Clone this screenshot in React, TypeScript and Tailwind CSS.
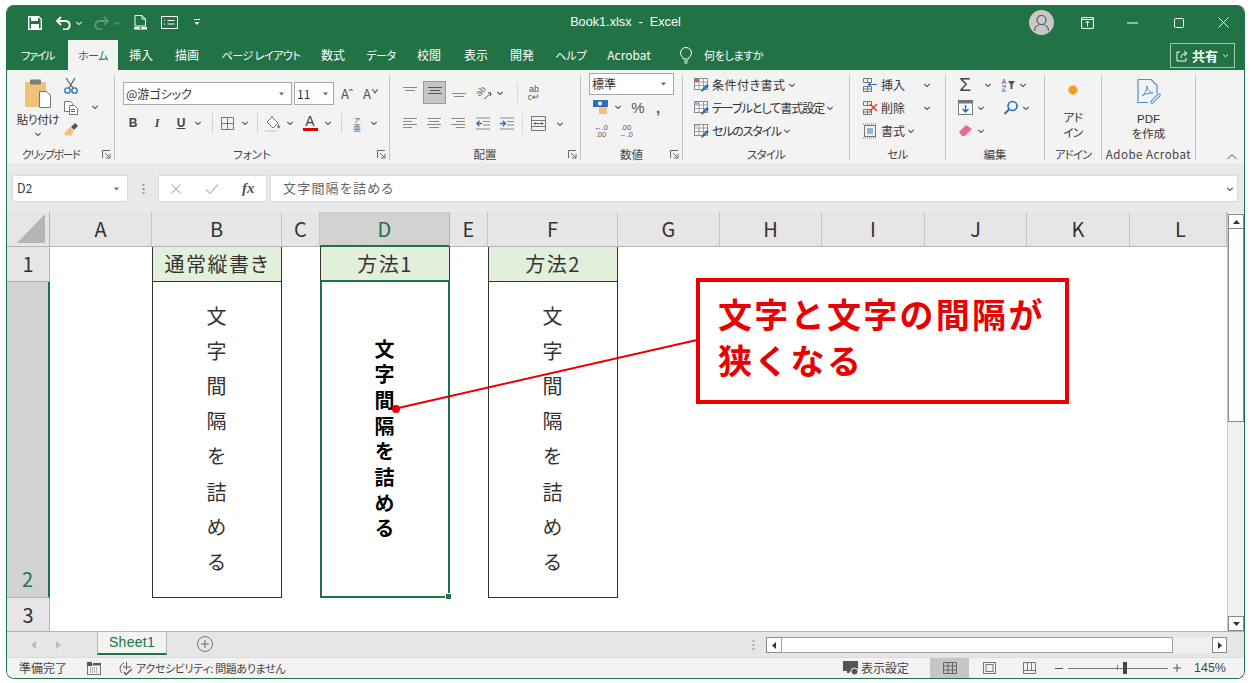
import React from "react";

const Chev = ({ c = "#555", s = 8 }: { c?: string; s?: number }) => (
  <svg width={s} height={s} viewBox="0 0 8 8" className="shrink-0"><path d="M1.2 2.8 4 5.4l2.8-2.6" fill="none" stroke={c} strokeWidth="1.1" /></svg>
);
const Launcher = () => (
  <svg width="9" height="9" viewBox="0 0 9 9" className="shrink-0"><path d="M.5 8V.5H8M3 3l4.5 4.5M4 8h4V4" fill="none" stroke="#666" strokeWidth="1" /></svg>
);
const Drop = () => <svg width="7" height="4" viewBox="0 0 7 4" className="shrink-0"><path d="M1 .5h5L3.5 3.5z" fill="#666" /></svg>;

function Lines({ rows, active }: { rows: [number, number][]; active?: boolean }) {
  return (
    <svg width="16" height="14" viewBox="0 0 16 14">
      {rows.map(([x, w], i) => (
        <rect key={i} x={x} y={1 + i * 3} width={w} height="1" fill={active ? "#555" : "#8a8a8a"} />
      ))}
    </svg>
  );
}

function Indent({ dir }: { dir: "l" | "r" }) {
  return (
    <svg width="16" height="14" viewBox="0 0 16 14">
      <path d="M1 1h14M8 4.500h7M8 8h7M1 12h14" stroke="#8a8a8a" strokeWidth="1" />
      <path d={dir === "l" ? "M7 6.500H2M4.500 3.800 1.800 6.500l2.700 2.700" : "M1 6.500h5M3.800 3.800l2.700 2.700-2.700 2.700"} stroke="#2f6fb5" strokeWidth="1.300" fill="none" />
    </svg>
  );
}

function Group({ w, label, labelCls = "", launcher, children }: { w: string; label: string; labelCls?: string; launcher?: boolean; children: React.ReactNode }) {
  return (
    <div className={`${w} h-[85px] mt-[5px] flex flex-col shrink-0 border-r border-[#c4c4c4]`}>
      <div className="h-[73px] flex min-h-0">{children}</div>
      <div className="h-[12px] flex items-center relative">
        <span className={`flex-1 text-center text-[11.500px] leading-[12px] text-[#444] whitespace-nowrap ${labelCls}`}>{label}</span>
        {launcher && <span className="absolute right-[3px] top-[2px]"><Launcher /></span>}
      </div>
    </div>
  );
}

const StyleRow = ({ icon, text, cls }: { icon: React.ReactNode; text: string; cls: string }) => (
  <div className="h-[23px] flex items-center gap-[2px] text-[12px] text-[#333] whitespace-nowrap">
    {icon}
    <span className={cls}>{text}</span>
    <Chev />
  </div>
);

const TableIcon = ({ tone }: { tone: string }) => (
  <svg width="16" height="16" viewBox="0 0 16 16">
    <rect x=".5" y="1.500" width="13" height="11" fill="#fff" stroke="#8a8a8a" />
    <path d="M.5 5h13M.5 8.500h13M5 1.500v11M9.500 1.500v11" stroke="#9a9a9a" />
    <rect x="1" y="2" width="4" height="3" fill={tone} />
    <path d="M8 15l7-6-2-2-6 6z" fill="#2f6fb5" />
  </svg>
);

const CellsIcon = ({ children }: { children?: React.ReactNode }) => (
  <svg width="16" height="16" viewBox="0 0 16 16">
    <path d="M1.500 1.500h8v4h-8zM1.500 9.500h8v5h-8zM5.500 1.500v4M5.500 9.500v5M1.500 12h8" fill="none" stroke="#777" />
    {children}
  </svg>
);

const Sep = () => <div className="w-px h-[20px] bg-[#d0d0d0] shrink-0" />;

function Ribbon() {
  return (
    <div className="h-[93px] shrink-0 bg-[#f3f3f3] flex">
      <Group w="w-[108px]" label="クリップボード" labelCls="text-[11px] tracking-[-1.500px] pr-[20px]" launcher>
        <div className="w-[60px] shrink-0 flex flex-col items-center pt-[3px] pl-[2px]">
          <svg width="28" height="31" viewBox="0 0 28 31">
            <rect x="1" y="4" width="21" height="25" rx="1" fill="#eec27a" />
            <rect x="6" y="1.500" width="11" height="5" rx="1" fill="#7d7d7d" />
            <path d="M15.500 13.500h7l4 4v12h-11z" fill="#fff" stroke="#777" />
          </svg>
          <span className="text-[11.500px] leading-[14px] text-[#333] mt-[3px] whitespace-nowrap tracking-[-0.300px]">貼り付け</span>
          <span className="mt-[4px]"><Chev /></span>
        </div>
        <div className="flex flex-col items-center w-[20px] -ml-[6px] pt-[2px] gap-[6px]">
          <svg width="16" height="17" viewBox="0 0 16 17"><path d="M3 1l7 10M12 1 6 11" stroke="#666" strokeWidth="1.300" fill="none" /><circle cx="4.500" cy="13.500" r="2.700" fill="none" stroke="#2f6fb5" strokeWidth="1.300" /><circle cx="11.500" cy="13.500" r="2.700" fill="none" stroke="#2f6fb5" strokeWidth="1.300" /></svg>
          <svg width="16" height="16" viewBox="0 0 16 16"><path d="M1.500 1.500h6l2 2v8h-8z" fill="#fff" stroke="#777" /><path d="M6.500 5.500h5l3 3v6h-8z" fill="#fff" stroke="#777" /><path d="M8 9.500h4M8 11.500h4" stroke="#2f6fb5" /></svg>
          <svg width="17" height="15" viewBox="0 0 17 15"><path d="M1 11l6-6 4 4-3 5-3-1-2 1z" fill="#eec27a" /><path d="M8 5l4-4 3 3-4 4z" fill="#555" /></svg>
        </div>
        <div className="pt-[28px] pl-[10px]"><Chev /></div>
      </Group>
      <Group w="w-[275px]" label="フォント" launcher>
        <div className="flex flex-col pl-[8px] pt-[7px]">
          <div className="flex items-center h-[23px]">
            <div className="w-[169px] h-[23px] bg-white border border-[#a8a8a8] flex items-center pl-[2px] pr-[6px] justify-between text-[12px] text-[#333]">
              <span>@游ゴシック</span><Drop />
            </div>
            <div className="w-[40px] h-[23px] ml-[2px] bg-white border border-[#a8a8a8] flex items-center pl-[2px] pr-[4px] justify-between text-[12px] text-[#333]">
              <span>11</span><Drop />
            </div>
            <span className="ml-[6px] text-[13px] text-[#555] w-[14px] text-center">Aˆ</span>
            <span className="ml-[9px] text-[13px] text-[#555] w-[14px] text-center">Aˇ</span>
          </div>
          <div className="flex items-center h-[20px] mt-[8px] pl-[3px] text-[#444]">
            <span className="w-[14px] text-center text-[12px] font-bold font-['Liberation_Sans']">B</span>
            <span className="ml-[10px] w-[14px] text-center text-[12px] italic font-bold font-['Liberation_Serif']">I</span>
            <span className="ml-[10px] w-[14px] text-center text-[12px] underline font-bold font-['Liberation_Sans']">U</span>
            <span className="ml-[6px]"><Chev /></span>
            <span className="ml-[10px]"><Sep /></span>
            <svg className="ml-[7px]" width="15" height="15" viewBox="0 0 15 15"><path d="M1.500 1.500h12v12h-12zM7.500 1.500v12M1.500 7.500h12" fill="none" stroke="#777" /></svg>
            <span className="ml-[6px]"><Chev /></span>
            <span className="ml-[8px]"><Sep /></span>
            <svg className="ml-[7px]" width="16" height="17" viewBox="0 0 16 17"><path d="M7 2l6 6-5 5-6-6z" fill="#fff" stroke="#777" /><path d="M7 2V1" stroke="#777" /><path d="M13 9l2 3-1 1.500-1.500-1z" fill="#2f6fb5" /><rect x="0" y="15" width="12" height="2" fill="#cfe3c4" /></svg>
            <span className="ml-[5px]"><Chev /></span>
            <span className="ml-[8px] w-[16px] flex flex-col items-center text-[14px] leading-[12px] font-['Liberation_Sans'] text-[#444]">A<span className="block w-[15px] h-[3px] bg-[#e00000] mt-[1px]" /></span>
            <span className="ml-[6px]"><Chev /></span>
            <span className="ml-[9px]"><Sep /></span>
            <span className="ml-[9px] w-[12px] flex flex-col items-center text-[#555]">
              <span className="text-[7px] leading-[8px]">ァ</span>
              <span className="text-[8px] leading-[9px]">亜</span>
            </span>
            <span className="ml-[7px]"><Chev /></span>
          </div>
        </div>
      </Group>
      <Group w="w-[191px]" label="配置" launcher>
        <div className="flex flex-col pl-[12px] pt-[6px]">
          <div className="flex items-center h-[23px]">
            <span className="w-[16px]"><Lines rows={[[1, 14], [3, 10]]} /></span>
            <span className="ml-[5px] w-[23px] h-[23px] bg-[#c6c6c6] border border-[#9a9a9a] flex items-center justify-center"><Lines active rows={[[1, 14], [3, 10], [1, 14]]} /></span>
            <span className="ml-[5px] w-[16px]"><Lines rows={[[0, 0], [0, 0], [1, 14], [3, 10]]} /></span>
            <span className="ml-[9px] w-[18px] h-[16px] flex items-center relative">
              <span className="-rotate-45 text-[9px] leading-[9px] text-[#666] font-['Liberation_Sans'] -mt-[3px]">ab</span>
              <svg className="absolute left-0 top-0" width="18" height="16" viewBox="0 0 18 16"><path d="M8 14l7-6M12 7.500l3 .5-.5 3" fill="none" stroke="#555" /></svg>
            </span>
            <span className="ml-[2px]"><Chev /></span>
            <div className="ml-[13px]"><div className="w-px h-[20px] bg-[#d8d8d8]" /></div>
            <span className="ml-[9px] text-[9px] leading-[8px] text-[#555] font-['Liberation_Sans'] w-[14px] text-center">ab<br />c↵</span>
          </div>
          <div className="flex items-center h-[23px] mt-[8px]">
            <span className="w-[16px]"><Lines rows={[[1, 14], [1, 9], [1, 14], [1, 9]]} /></span>
            <span className="ml-[8px] w-[16px]"><Lines rows={[[1, 14], [3, 10], [1, 14], [3, 10]]} /></span>
            <span className="ml-[8px] w-[16px]"><Lines rows={[[1, 14], [6, 9], [1, 14], [6, 9]]} /></span>
            <span className="ml-[9px]"><Indent dir="l" /></span>
            <span className="ml-[8px]"><Indent dir="r" /></span>
            <div className="ml-[7px]"><div className="w-px h-[20px] bg-[#d8d8d8]" /></div>
            <svg className="ml-[7px]" width="17" height="17" viewBox="0 0 17 17"><path d="M1.500 1.500h14v14h-14zM1.500 5.500h14M1.500 11.500h14" fill="none" stroke="#777" /><path d="M4 8.500h9M5.500 7 4 8.500 5.500 10M11.500 7 13 8.500 11.500 10" fill="none" stroke="#2f6fb5" /></svg>
            <span className="ml-[9px]"><Chev /></span>
          </div>
        </div>
      </Group>
      <Group w="w-[102px]" label="数値" launcher>
        <div className="flex flex-col pl-[8px]">
          <div className="w-[85px] h-[22px] -mt-[2px] bg-white border border-[#a8a8a8] flex items-center pl-[2px] pr-[6px] justify-between text-[12px] text-[#333]"><span>標準</span><Drop /></div>
          <div className="flex items-center h-[24px] pl-[3px]">
            <svg width="17" height="16" viewBox="0 0 17 16"><rect x="1" y="1" width="15" height="7" fill="#2f6fb5" /><circle cx="8" cy="4.500" r="2" fill="#fff" /><rect x="7" y="8" width="8" height="7" fill="#eec27a" /></svg>
            <span className="ml-[5px]"><Chev /></span>
            <span className="ml-[8px] text-[15px] text-[#555] w-[16px] text-center leading-none font-['Liberation_Sans']">%</span>
            <span className="ml-[10px] text-[15px] font-bold text-[#555] w-[8px] leading-none font-['Liberation_Sans']">,</span>
          </div>
          <div className="flex items-center h-[24px] pl-[4px] text-[7.500px] leading-[7px] text-[#555] font-['Liberation_Sans']">
            <span className="w-[16px] text-center"><span className="text-[#2f6fb5]">←</span>.0<br />.00</span>
            <span className="ml-[9px] w-[16px] text-center">.00<br /><span className="text-[#2f6fb5]">→</span>.0</span>
          </div>
        </div>
      </Group>
      <Group w="w-[167px]" label="スタイル" labelCls="tracking-[-0.800px]">
        <div className="flex flex-col pl-[11px] -mt-[2px]">
          <StyleRow icon={<TableIcon tone="#d9534f" />} text="条件付き書式" cls="tracking-[0.500px]" />
          <StyleRow icon={<TableIcon tone="#9cb9dc" />} text="テーブルとして書式設定" cls="tracking-[-1px]" />
          <StyleRow icon={<TableIcon tone="#cfd8e6" />} text="セルのスタイル" cls="tracking-[-1.200px]" />
        </div>
      </Group>
      <Group w="w-[96px]" label="セル" labelCls="tracking-[-0.500px]">
        <div className="flex flex-col pl-[12px] w-full -mt-[2px]">
          <div className="h-[23px] flex items-center text-[12px] text-[#333]"><CellsIcon><path d="M6 7.500h9M9 5.500l-3 2 3 2" stroke="#2f6fb5" fill="none" /></CellsIcon><span className="ml-[3px] w-[40px]">挿入</span><span className="ml-[2px]"><Chev /></span></div>
          <div className="h-[23px] flex items-center text-[12px] text-[#333]"><CellsIcon><path d="M8 4l7 7M15 4l-7 7" stroke="#d8452f" strokeWidth="1.500" /></CellsIcon><span className="ml-[3px] w-[40px]">削除</span><span className="ml-[2px]"><Chev /></span></div>
          <div className="h-[23px] flex items-center text-[12px] text-[#333]"><svg width="16" height="16" viewBox="0 0 16 16"><rect x="2.500" y="2.500" width="11" height="11" fill="none" stroke="#777" /><rect x="5" y="5" width="6" height="6" fill="#8fb4dc" /><path d="M1 1h14M1 15h14" stroke="#777" strokeDasharray="1 1" /></svg><span className="ml-[3px]">書式</span><span className="ml-[2px]"><Chev /></span></div>
        </div>
      </Group>
      <Group w="w-[99px]" label="編集">
        <div className="flex flex-col pl-[12px] w-full -mt-[2px]">
          <div className="h-[23px] flex items-center">
            <span className="w-[14px] text-[19px] leading-none text-[#444] font-['Liberation_Sans'] text-center">Σ</span>
            <span className="ml-[12px]"><Chev /></span>
            <svg className="ml-[9px]" width="15" height="14" viewBox="0 0 15 14"><path d="M1 6 3 1l2 5M1.700 4.500h2.600" fill="none" stroke="#7a5fb0" strokeWidth=".9" /><path d="M1 8h4l-4 5h4" fill="none" stroke="#2f6fb5" strokeWidth=".9" /><path d="M7 3h7l-2.500 3.500V11h-2V6.500z" fill="#555" /></svg>
            <span className="ml-[3px]"><Chev /></span>
          </div>
          <div className="h-[23px] flex items-center">
            <svg width="15" height="15" viewBox="0 0 15 15"><rect x=".5" y=".5" width="14" height="14" fill="#fff" stroke="#777" /><rect x=".5" y=".5" width="14" height="3" fill="#777" /><path d="M7.500 5v7M4.500 9l3 3 3-3" fill="none" stroke="#2f6fb5" strokeWidth="1.500" /></svg>
            <span className="ml-[4px]"><Chev /></span>
            <svg className="ml-[18px]" width="16" height="16" viewBox="0 0 16 16"><circle cx="9.500" cy="6" r="4.500" fill="none" stroke="#2f6fb5" strokeWidth="1.600" /><path d="M6 9.500 1.500 14" stroke="#2f6fb5" strokeWidth="2" /></svg>
            <span className="ml-[3px]"><Chev /></span>
          </div>
          <div className="h-[23px] flex items-center">
            <svg width="15" height="13" viewBox="0 0 15 13"><path d="M1 8l7-7 6 4-7 7H4z" fill="#ec6a8a" /></svg>
            <span className="ml-[4px]"><Chev /></span>
          </div>
        </div>
      </Group>
      <Group w="w-[57px]" label="アドイン" labelCls="tracking-[-1px]">
        <div className="flex flex-col items-center w-full pt-[10px]">
          <span className="w-[10px] h-[10px] rounded-full bg-[#f59a23] border border-[#fbc57e]" />
          <span className="mt-[15px] text-[11.500px] leading-[15px] text-[#333] text-center tracking-[-0.500px]">アド<br />イン</span>
        </div>
      </Group>
      <Group w="w-[94px]" label="Adobe Acrobat" labelCls="tracking-[0.500px]">
        <div className="flex flex-col items-center w-full">
          <svg className="mt-[3px]" width="28" height="28" viewBox="0 0 28 28"><path d="M3 1.500h13l6 6v8M3 1.500v23h10" fill="none" stroke="#4d8fd0" strokeWidth="1.200" /><path d="M7 18c3-2 5-6 5-10 0 3 2 6 6 7-4 0-8 1-11 3z" fill="none" stroke="#4d8fd0" /><path d="M17 24l7-7" stroke="#4d8fd0" strokeWidth="3.500" strokeLinecap="round" /><path d="M17 24l7-7" stroke="#f3f3f3" strokeWidth="1.500" strokeLinecap="round" /></svg>
          <span className="mt-[6px] text-[11.500px] leading-[15px] text-[#333] text-center font-['Liberation_Sans','Noto_Sans_CJK_JP']">PDF<br />を作成</span>
        </div>
      </Group>
      <div className="flex-1 flex items-end justify-end pr-[6px] pb-[2px]">
        <svg width="12" height="8" viewBox="0 0 12 8"><path d="M1.500 6 6 1.800 10.500 6" fill="none" stroke="#555" /></svg>
      </div>
    </div>
  );
}

const cols = "grid-cols-[43px_102px_130px_38px_130px_38px_130px_102px_102px_103px_102px_103px_1fr]";

function Hdr({ t, sel }: { t: string; sel?: boolean }) {
  return (
    <div className={`flex items-center justify-center text-[20px] border-r border-b ${t === "L" ? "pl-[5px]" : ""} ${sel ? "bg-[#d2d2d2] text-[#217346] border-b-2 border-b-[#217346] border-r-[#b5b5b5]" : "bg-[#e6e6e6] text-[#333] border-r-[#c4c4c4] border-b-[#b5b5b5]"}`}>{t}</div>
  );
}

const Vert = ({ bold }: { bold?: boolean }) => (
  <span className={`[writing-mode:vertical-rl] whitespace-nowrap text-[20px] ${bold ? "font-semibold text-black tracking-[5.700px]" : "text-[#333] tracking-[15.200px]"}`}>文字間隔を詰める</span>
);

function Sheet() {
  return (
    <div className="h-[419px] shrink-0 flex bg-white">
      <div className={`flex-1 grid ${cols} grid-rows-[35px_35px_316px_33px]`}>
        <div className="bg-[#e6e6e6] border-r border-b border-[#b5b5b5] flex items-end justify-end pr-[3px] pb-[3px]">
          <svg width="29" height="29" viewBox="0 0 29 29"><path d="M28 0v29H0z" fill="#b5b5b5" /></svg>
        </div>
        {["A", "B", "C", "D", "E", "F", "G", "H", "I", "J", "K", "L"].map((c) => <Hdr key={c} t={c} sel={c === "D"} />)}

        <div className="bg-[#e6e6e6] border-r border-b border-[#b5b5b5] flex items-center justify-center text-[20px] text-[#333]">1</div>
        <div />
        <div className="bg-[#e2efda] border-x border-b border-[#333] flex items-center justify-center text-[20px] text-[#333] tracking-[1.500px]">通常縦書き</div>
        <div />
        <div className="bg-[#e2efda] border-x border-b-2 border-x-[#333] border-b-[#217346] flex items-center justify-center text-[20px] text-[#333] tracking-[1.500px]">方法1</div>
        <div />
        <div className="bg-[#e2efda] border-x border-b border-[#333] flex items-center justify-center text-[20px] text-[#333] tracking-[1.500px]">方法2</div>
        <div className="col-span-6" />

        <div className="bg-[#d2d2d2] border-r-2 border-r-[#217346] border-b border-b-[#b5b5b5] flex items-end justify-center text-[20px] leading-[30px] pb-[3px] text-[#217346]">2</div>
        <div />
        <div className="border-x border-b border-[#333] flex items-center justify-center pr-[2px] pt-[14px]"><Vert /></div>
        <div />
        <div className="border-x-2 border-b-2 border-[#217346] flex items-center justify-center relative pr-[2px] pt-[6px]">
          <Vert bold />
          <span className="absolute right-[-3px] bottom-[-3px] w-[5px] h-[5px] bg-[#217346] border border-white box-content -m-px" />
        </div>
        <div />
        <div className="border-x border-b border-[#333] flex items-center justify-center pr-[2px] pt-[14px]"><Vert /></div>
        <div className="col-span-6" />

        <div className="bg-[#e6e6e6] border-r border-[#b5b5b5] flex items-center justify-center text-[20px] text-[#333]">3</div>
      </div>
      <div className="w-[17px] shrink-0 bg-[#f0f0f0] flex flex-col border-l border-[#c6c6c6] pt-[2px]">
        <div className="h-[15px] bg-white border border-[#8a8a8a] flex items-center justify-center"><svg width="7" height="4" viewBox="0 0 7 4"><path d="M3.500 0 7 4H0z" fill="#333" /></svg></div>
        <div className="h-[194px] -mt-px bg-white border border-[#8a8a8a]" />
        <div className="flex-1" />
        <div className="h-[15px] bg-white border border-[#8a8a8a] flex items-center justify-center"><svg width="7" height="4" viewBox="0 0 7 4"><path d="M3.500 4 7 0H0z" fill="#333" /></svg></div>
      </div>
    </div>
  );
}

const tabs: [string, string][] = [
  ["ファイル", "w-[61px] text-[11px] tracking-[-1.300px]"],
  ["ホーム", "w-[50px] text-[11px] tracking-[-0.400px]"],
  ["挿入", "w-[46px]"],
  ["描画", "w-[46px]"],
  ["ページ レイアウト", "w-[102px] text-[11px] tracking-[-0.500px]"],
  ["数式", "w-[42px]"],
  ["データ", "w-[54px] text-[11px] tracking-[-0.400px]"],
  ["校閲", "w-[42px]"],
  ["表示", "w-[52px]"],
  ["開発", "w-[40px]"],
  ["ヘルプ", "w-[58px] text-[11px]"],
  ["Acrobat", "w-[58px]"],
];

export default function App() {
  return (
    <div className="w-[1251px] h-[683px] bg-white pt-[5px] pb-[4px] px-[6px] relative overflow-hidden font-['Noto_Sans_CJK_JP',sans-serif] [font-feature-settings:'palt'] text-[#333]">
      <div className="w-[1239px] h-[674px] rounded-lg overflow-hidden flex flex-col border-x border-b border-[#217346] bg-[#f3f3f3]">
        {/* Title bar */}
        <div className="h-[35px] shrink-0 bg-[#217346] grid grid-cols-[1fr_auto_1fr] items-center text-white">
          <div className="flex items-center pl-[21px]">
            <svg width="14" height="14" viewBox="0 0 14 14"><path d="M.7.700h10l2.600 2.600v10H.7z" fill="none" stroke="#fff" strokeWidth="1.400" /><rect x="3" y="1" width="7" height="4" fill="#fff" /><rect x="3" y="8" width="8" height="5" fill="#fff" /></svg>
            <svg className="ml-[14px]" width="16" height="14" viewBox="0 0 16 14"><path d="M5 1 1 5l4 4M1.500 5H10a4.300 4.300 0 0 1 0 8.500H7" fill="none" stroke="#fff" strokeWidth="1.800" /></svg>
            <span className="ml-[3px]"><Chev c="#cfe0d6" /></span>
            <svg className="ml-[10px]" width="16" height="14" viewBox="0 0 16 14"><path d="M11 1l4 4-4 4M14.500 5H6a4.300 4.300 0 0 0 0 8.500h3" fill="none" stroke="#5d9a7a" strokeWidth="1.800" /></svg>
            <span className="ml-[4px]"><Chev c="#5d9a7a" /></span>
            <svg className="ml-[13px]" width="13" height="15" viewBox="0 0 13 15"><path d="M1 .5h7l3.500 3.500v7H1zM8 .5V4h3.500" fill="none" stroke="#fff" /><rect x="0" y="12" width="13" height="2.500" fill="#fff" /><circle cx="6.500" cy="13" r="1" fill="#217346" /></svg>
            <svg className="ml-[14px]" width="17" height="13" viewBox="0 0 17 13"><path d="M.5.500h16v12H.5zM6.500 4.500h7M6.500 8h7M3 4.500h1M3 8h1" fill="none" stroke="#fff" /></svg>
            <svg className="ml-[16px]" width="6" height="7" viewBox="0 0 6 7"><path d="M0 .5h6" stroke="#fff" /><path d="M.5 3h5L3 6z" fill="#fff" /></svg>
          </div>
          <div className="text-[12.700px] text-white whitespace-pre font-['Liberation_Sans'] pt-[1px]">Book1.xlsx  -  Excel</div>
          <div className="flex items-center justify-end">
            <span className="w-[25px] h-[25px] rounded-full bg-[#c8c8c8] flex items-center justify-center">
              <svg width="17" height="18" viewBox="0 0 17 18"><circle cx="8.500" cy="6" r="4.500" fill="none" stroke="#555" strokeWidth="1.200" /><path d="M1.500 17c0-4 3-6.500 7-6.500s7 2.500 7 6.500" fill="none" stroke="#555" strokeWidth="1.200" /></svg>
            </span>
            <svg className="ml-[27px]" width="13" height="12" viewBox="0 0 13 12"><path d="M.6.600h11.800v10.800H.6zM.6 2.500h11.800M6.500 9.500v-5M4.500 6l2-2 2 2" fill="none" stroke="#fff" /></svg>
            <svg className="ml-[33px]" width="11" height="2" viewBox="0 0 11 2"><path d="M0 1h11" stroke="#fff" /></svg>
            <svg className="ml-[36px]" width="10" height="10" viewBox="0 0 10 10"><rect x=".5" y=".5" width="9" height="9" rx="1" fill="none" stroke="#fff" /></svg>
            <svg className="ml-[34px] mr-[15px]" width="11" height="11" viewBox="0 0 11 11"><path d="M.5.500l10 10M10.500.5l-10 10" stroke="#fff" /></svg>
          </div>
        </div>
        {/* Tabs */}
        <div className="h-[30px] shrink-0 bg-[#217346] flex items-stretch text-[12px] text-white">
          {tabs.map(([t, w]) => (
            <div key={t} className={`${w} flex items-center justify-center whitespace-nowrap ${t === "ホーム" ? "bg-[#f3f3f3] text-[#217346]" : ""}`}>{t}</div>
          ))}
          <div className="flex items-center ml-[21px] gap-[11px]">
            <svg width="14" height="17" viewBox="0 0 14 17"><path d="M4.500 12C4 9.500 1.500 9 1.500 6a5.500 5.500 0 0 1 11 0c0 3-2.500 3.500-3 6zM5 14h4M5.500 16h3" fill="none" stroke="#fff" /></svg>
            <span className="text-[11px] tracking-[-0.300px]">何をしますか</span>
          </div>
          <div className="ml-auto mr-[9px] mt-[3px] mb-[2px] w-[65px] border border-[#9fc7b2] flex items-center justify-center gap-[4px]">
            <svg width="12" height="12" viewBox="0 0 12 12"><path d="M4 2H1v9h9V8M5 8c0-3 2-4.500 5-4.500M8 1l3 2.500L8 6" fill="none" stroke="#fff" /></svg>
            <span className="font-bold text-[13px]">共有</span>
            <Chev c="#fff" s={7} />
          </div>
        </div>
        <Ribbon />
        {/* Formula bar */}
        <div className="h-[49px] shrink-0 bg-[#e9e9e9] pt-[12px] pr-[6px] pl-[5px]">
          <div className="h-[27px] flex items-stretch">
            <div className="w-[116px] bg-white border border-[#dcdcdc] flex items-center justify-between pl-[4px] pr-[7px] text-[12.500px] text-[#444]"><span>D2</span><Drop /></div>
            <div className="w-[30px] flex items-center justify-center"><svg width="3" height="12" viewBox="0 0 3 12"><path d="M1.500 1v2M1.500 5v2M1.500 9v2" stroke="#999" strokeWidth="2" /></svg></div>
            <div className="w-[109px] bg-white border border-[#dcdcdc] flex items-center pl-[11px] gap-[23px]">
              <svg width="12" height="12" viewBox="0 0 12 12"><path d="M1.500 1.500l9 9M10.500 1.500l-9 9" stroke="#bbb" strokeWidth="1.200" /></svg>
              <svg width="14" height="12" viewBox="0 0 14 12"><path d="M1 6.500l4 4 8-9" fill="none" stroke="#bbb" strokeWidth="1.200" /></svg>
              <span className="text-[15px] italic font-bold font-['Liberation_Serif'] text-[#555]">fx</span>
            </div>
            <div className="flex-1 ml-[3px] bg-white border border-[#dcdcdc] flex items-center justify-between pl-[12px] pr-[3px] text-[13px] text-[#666] tracking-[1.200px]">
              <span className="-mt-[2px]">文字間隔を詰める</span><Chev />
            </div>
          </div>
        </div>
        <Sheet />
        {/* Sheet tabs */}
        <div className="h-[26px] shrink-0 bg-[#e6e6e6] border-t border-[#b5b5b5] flex items-start">
          <div className="w-[90px] h-full flex items-center pl-[24px] gap-[20px] shrink-0">
            <svg width="5" height="8" viewBox="0 0 5 8"><path d="M5 0v8L0 4z" fill="#bcbcbc" /></svg>
            <svg width="5" height="8" viewBox="0 0 5 8"><path d="M0 0v8l5-4z" fill="#bcbcbc" /></svg>
          </div>
          <div className="w-[70px] h-[23px] bg-[#f3f3f3] border-x border-[#b5b5b5] border-b-2 border-b-[#217346] flex items-center justify-center text-[14px] text-[#217346] font-['Liberation_Sans'] tracking-[0.300px]">Sheet1</div>
          <div className="ml-[30px] mt-[4px] w-[16px] h-[16px] rounded-full border border-[#777] flex items-center justify-center">
            <svg width="10" height="10" viewBox="0 0 10 10"><path d="M5 1v8M1 5h8" stroke="#666" /></svg>
          </div>
          <div className="ml-[539px] mt-[7px]"><svg width="3" height="12" viewBox="0 0 3 12"><path d="M1.500 1v2M1.500 5v2M1.500 9v2" stroke="#aaa" strokeWidth="2" /></svg></div>
          <div className="ml-[11px] mt-[5px] w-[461px] h-[16px] flex items-stretch">
            <div className="w-[16px] bg-white border border-[#8a8a8a] flex items-center justify-center"><svg width="4" height="7" viewBox="0 0 4 7"><path d="M4 0v7L0 3.500z" fill="#333" /></svg></div>
            <div className="w-[392px] -ml-px bg-white border border-[#a0a0a0]" />
            <div className="flex-1 bg-[#f0f0f0]" />
            <div className="w-[15px] bg-white border border-[#8a8a8a] flex items-center justify-center"><svg width="4" height="7" viewBox="0 0 4 7"><path d="M0 0v7l4-3.500z" fill="#333" /></svg></div>
          </div>
        </div>
        {/* Status */}
        <div className="flex-1 min-h-0 bg-[#f3f3f3] flex items-stretch text-[12px] text-[#444] border-t border-[#dcdcdc]">
          <span className="ml-[12px] self-center">準備完了</span>
          <svg className="ml-[20px] self-center" width="14" height="13" viewBox="0 0 14 13"><rect x=".5" y="3" width="13" height="9.500" fill="none" stroke="#777" /><rect x="0" y="0" width="5" height="4" fill="#555" /><rect x="6" y="1" width="8" height="2" fill="#555" /><path d="M3 6h8M3 8h8M3 10h8" stroke="#777" strokeDasharray="1 1" /></svg>
          <svg className="ml-[18px] self-center" width="15" height="15" viewBox="0 0 15 15"><path d="M5 2a6 6 0 0 0-2 10" fill="none" stroke="#555" /><path d="M7.500 1v4M4 6h8M7.500 6v3" stroke="#555" /><path d="M5 11l2 2.500L13 8" fill="none" stroke="#555" strokeWidth="1.400" /></svg>
          <span className="ml-[2px] self-center text-[11px] tracking-[-0.350px] whitespace-nowrap">アクセシビリティ: 問題ありません</span>
          <div className="flex-1" />
          <svg className="self-center" width="17" height="15" viewBox="0 0 17 15"><path d="M0 0h15v10H8l-2 2H4v-2H0z" fill="#555" /><circle cx="11.500" cy="10.500" r="3.500" fill="#555" stroke="#f3f3f3" /></svg>
          <span className="self-center text-[12px] ml-px">表示設定</span>
          <div className="ml-[21px] w-[39px] bg-[#c6c6c6] flex items-center justify-center"><svg width="14" height="12" viewBox="0 0 14 12"><path d="M.5.500h13v11H.5zM.5 4h13M.5 8h13M5 .5v11M9.500.5v11" fill="none" stroke="#666" /></svg></div>
          <svg className="ml-[14px] self-center" width="13" height="12" viewBox="0 0 13 12"><rect x=".5" y=".5" width="12" height="11" fill="none" stroke="#777" /><rect x="3" y="2.500" width="7" height="7" fill="none" stroke="#777" /></svg>
          <svg className="ml-[27px] self-center" width="13" height="12" viewBox="0 0 13 12"><path d="M.5.500h12v11H.5zM.5 8.500h12M4.500.5v8M8.500.5v8" fill="none" stroke="#777" /></svg>
          <span className="ml-[19px] self-center w-[8px] h-px bg-[#555]" />
          <div className="ml-[5px] self-center w-[100px] h-[12px] flex items-center relative">
            <div className="w-full h-px bg-[#777]" />
            <span className="absolute left-[49px] top-[3px] w-px h-[5px] bg-[#777]" />
            <span className="absolute left-[55px] top-0 w-[4px] h-[12px] bg-[#444]" />
          </div>
          <svg className="ml-[5px] self-center" width="8" height="8" viewBox="0 0 8 8"><path d="M4 0v8M0 4h8" stroke="#555" /></svg>
          <span className="ml-[13px] mr-[18px] self-center text-[12.500px] font-['Liberation_Sans']">145%</span>
        </div>
      </div>

      {/* Annotation */}
      <svg className="absolute left-0 top-0 pointer-events-none" width="1251" height="683" viewBox="0 0 1251 683">
        <path d="M396 408.500 697 340" stroke="#e60000" strokeWidth="2" />
        <circle cx="396" cy="409" r="4" fill="#e60000" />
      </svg>
      <div className="absolute left-[696px] top-[278px] w-[373px] h-[126px] bg-white border-[4px] border-[#ea0000] pl-[18px] pt-[9px] text-[34px] leading-[46px] font-bold text-[#ea0000] [font-feature-settings:normal] tracking-[2.300px]">
        文字と文字の間隔が<br />狭くなる
      </div>
    </div>
  );
}
